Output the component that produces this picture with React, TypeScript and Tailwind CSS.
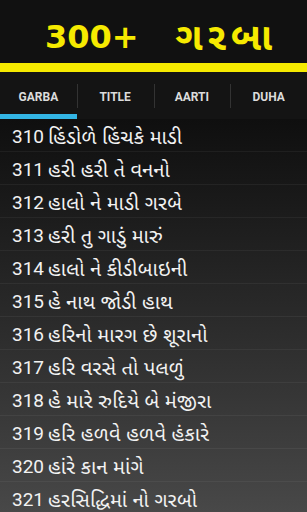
const items = [
  { n: "310", t: "હિંડોળે હિંચકે માડી" },
  { n: "311", t: "હરી હરી તે વનનો" },
  { n: "312", t: "હાલો ને માડી ગરબે" },
  { n: "313", t: "હરી તુ ગાડું મારું" },
  { n: "314", t: "હાલો ને કીડીબાઇની" },
  { n: "315", t: "હે નાથ જોડી હાથ" },
  { n: "316", t: "હરિનો મારગ છે શૂરાનો" },
  { n: "317", t: "હરિ વરસે તો પલળું" },
  { n: "318", t: "હે મારે રુદિયે બે મંજીરા" },
  { n: "319", t: "હરિ હળવે હળવે હંકારે" },
  { n: "320", t: "હાંરે કાન માંગે" },
  { n: "321", t: "હરસિદ્ધિમાં નો ગરબો" },
];

const tabs = ["GARBA", "TITLE", "AARTI", "DUHA"];

export default function App() {
  return (
    <div className="w-[307px] h-[512px] overflow-hidden bg-[#111111] font-['Roboto','Noto_Sans_Gujarati','Noto_Sans',sans-serif]">
      {/* Title */}
      <div className="h-[63px] flex items-center pl-[45px] pt-[10px]">
        <span className="text-[#f6ea00] text-[32px] font-bold leading-none font-['DejaVu_Sans',sans-serif]">300+</span>
        <span className="ml-[37px] text-[#f6ea00] text-[38px] font-bold leading-none tracking-[5px]">ગરબા</span>
      </div>
      <div className="h-[9px] bg-[#f6ea00]" />

      {/* Tabs */}
      <div className="h-[47px] bg-[#141414] grid grid-cols-4">
        {tabs.map((t, i) => (
          <div key={t} className="relative flex items-center justify-center">
            <span className="text-[#dcdcdc] text-[12px] font-bold mt-[2px]">{t}</span>
            {i > 0 && <div className="absolute left-0 top-[12px] h-[24px] w-px bg-[#333333]" />}
            {i === 0 && <div className="absolute left-0 right-0 bottom-0 h-[5px] bg-[#33b5e5]" />}
          </div>
        ))}
      </div>

      {/* List */}
      <div className="h-[393px] bg-gradient-to-b from-[#0f0f0f] to-[#484848]">
        {items.map((it) => (
          <div key={it.n} className="h-[33px] flex items-center pl-[12px] pt-[3px] border-b border-white/5 text-[#f2f2f2] leading-none">
            <span className="mr-[4px] text-[19px]">{it.n}</span>
            <span className="text-[20px] tracking-[0.3px]">{it.t}</span>
          </div>
        ))}
      </div>
    </div>
  );
}
